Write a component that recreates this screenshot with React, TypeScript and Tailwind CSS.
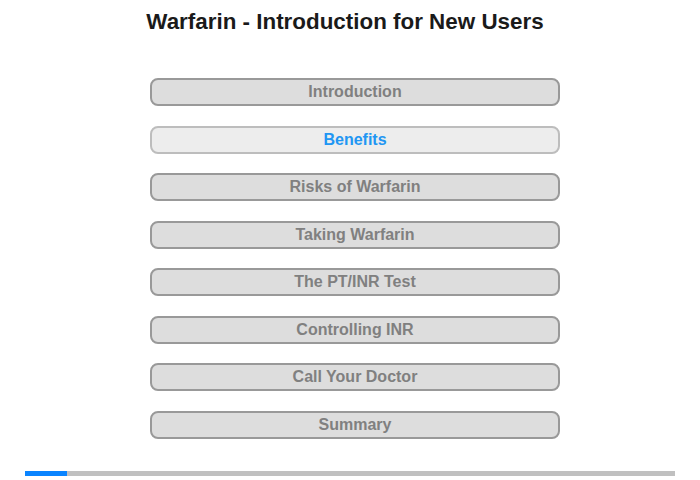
import React from 'react';

const topics = [
  'Introduction',
  'Benefits',
  'Risks of Warfarin',
  'Taking Warfarin',
  'The PT/INR Test',
  'Controlling INR',
  'Call Your Doctor',
  'Summary',
];

const active = 1;

export default function App() {
  return (
    <div className="w-[700px] h-[480px] bg-white font-['Liberation_Sans',Arial,sans-serif] flex flex-col">
      <h1 className="pt-[9px] pr-[10px] text-center text-[22.4px] leading-[26px] font-bold text-[#1a1a1a]">
        Warfarin - Introduction for New Users
      </h1>

      <div className="mt-[43px] pl-[150px] flex flex-col gap-[19.5px]">
        {topics.map((t, i) => (
          <div
            key={t}
            className={`w-[410px] h-[28px] rounded-[8px] border-2 flex items-center justify-center text-[16px] font-bold ${
              i === active
                ? 'bg-[#ededed] border-[#bdbdbd] text-[#2196f3]'
                : 'bg-[#dddddd] border-[#999999] text-[#808080]'
            }`}
          >
            {t}
          </div>
        ))}
      </div>

      {/* progress */}
      <div className="mt-auto mb-[4px] mx-[25px] h-[5px] bg-[#c0c0c0] flex">
        <div className="w-[42px] h-full bg-[#0a84ff]" />
      </div>
    </div>
  );
}
